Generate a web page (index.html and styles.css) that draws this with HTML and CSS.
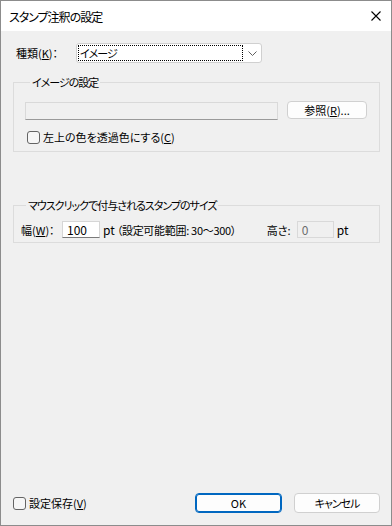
FILE: index.html
```html
<!DOCTYPE html>
<html>
<head>
  <title>スタンプ注釈の設定</title>
  <link rel="stylesheet" href="styles.css">
</head>
<body>
  <div class="window">
    <div class="titlebar">
      <span class="title kana">スタンプ注釈の設定</span>
      <svg class="close" width="10" height="10" viewBox="0 0 10 10">
        <path d="M0.5 0.5 L9.5 9.5 M9.5 0.5 L0.5 9.5" stroke="#000" stroke-width="1.1" fill="none"/>
      </svg>
    </div>

    <div class="client">
      <div class="type-row">
        <span class="label">種類(<u>K</u>)：</span>
        <div class="combo">
          <span class="combo-text kana">イメージ</span>
          <svg class="chevron" width="9" height="5" viewBox="0 0 9 5">
            <path d="M0.5 0.5 L4.5 4.5 L8.5 0.5" stroke="#606060" stroke-width="1" fill="none"/>
          </svg>
        </div>
      </div>

      <div class="group image-group">
        <div class="group-title kana">イメージの設定</div>
        <div class="file-row">
          <div class="field disabled wide"></div>
          <button class="btn browse">参照(<u>R</u>)...</button>
        </div>
        <label class="check-row">
          <span class="checkbox"></span>
          <span>左上の色を透過色にする(<u>C</u>)</span>
        </label>
      </div>

      <div class="group size-group">
        <div class="group-title kana">マウスクリックで付与されるスタンプのサイズ</div>
        <div class="size-row">
          <span class="label">幅(<u>W</u>)：</span>
          <div class="field small">100</div>
          <span class="unit">pt</span>
          <span class="range">（設定可能範囲: 30～300）</span>
          <span class="label height-label">高さ:</span>
          <div class="field small disabled">0</div>
          <span class="unit">pt</span>
        </div>
      </div>

      <div class="bottom-row">
        <label class="check-row save">
          <span class="checkbox"></span>
          <span>設定保存(<u>V</u>)</span>
        </label>
        <button class="btn ok">OK</button>
        <button class="btn cancel kana">キャンセル</button>
      </div>
    </div>
  </div>
</body>
</html>
```

FILE: styles.css
```css
body {
  margin: 0;
  font-family: "Noto Sans CJK JP", "Noto Sans", sans-serif;
  font-size: 11px;
  font-feature-settings: "palt";
  color: #000;
}
u {
  text-decoration: underline;
  text-underline-offset: 1px;
}
/* katakana in the dialog font runs narrower */
.kana {
  letter-spacing: -1px;
}
.window {
  width: 392px;
  height: 526px;
  box-sizing: border-box;
  border: 1px solid #8c8c8c;
  background: #f0f0f0;
  display: flex;
  flex-direction: column;
}
.titlebar {
  height: 30px;
  background: #fff;
  display: flex;
  align-items: center;
  padding-left: 8px;
  font-size: 12px;
}
.title {
  flex: 1;
}
.close {
  margin-right: 10px;
}
.client {
  flex: 1;
  display: flex;
  flex-direction: column;
  padding: 0 11px 12px 12px;
}
.type-row {
  display: flex;
  align-items: center;
  margin-top: 12px;
  height: 20px;
}
.type-row .label {
  width: 60px;
  padding-left: 3px;
}
.combo {
  width: 186px;
  height: 20px;
  box-sizing: border-box;
  background: #fff;
  border: 1px solid #d0d0d0;
  border-radius: 3px;
  display: flex;
  align-items: center;
}
.combo-text {
  width: 165px;
  height: 16px;
  box-sizing: border-box;
  margin-left: 1px;
  border: 1px dotted #000;
  line-height: 14px;
  padding-left: 1px;
}
.chevron {
  margin-left: 5px;
}
.group {
  border: 1px solid #dcdcdc;
}
.group-title {
  display: table;
  margin: -8px 0 0 5px;
  padding: 0 2px;
  line-height: 14px;
  background: #f0f0f0;
}
.image-group {
  margin-top: 19px;
  padding: 0 0 7px 11px;
}
.file-row {
  display: flex;
  align-items: flex-start;
  margin-top: 12px;
}
.field {
  box-sizing: border-box;
  height: 18px;
  background: #fff;
  border: 1px solid #d6d6d6;
  border-bottom-color: #7a7a7a;
  line-height: 16px;
  padding-left: 4px;
}
.field.disabled {
  background: #f0f0f0;
  border-color: #d9d9d9;
  color: #6d6d6d;
}
.field.wide {
  width: 253px;
  margin-top: 1px;
  border-bottom-color: #9a9a9a;
}
.btn {
  font-family: inherit;
  font-size: 11px;
  font-feature-settings: "palt";
  background: #fdfdfd;
  border: 1px solid #d0d0d0;
  border-radius: 4px;
  padding: 0;
  color: #000;
}
.browse {
  width: 80px;
  height: 18px;
  margin-left: 9px;
  line-height: 16px;
}
.check-row {
  display: flex;
  align-items: center;
  height: 14px;
}
.image-group .check-row {
  margin-top: 10px;
  margin-left: 2px;
}
.checkbox {
  width: 13px;
  height: 13px;
  box-sizing: border-box;
  border: 1px solid #646464;
  border-radius: 3px;
  background: #f6f6f6;
  margin-right: 3px;
}
.size-group {
  margin-top: 53px;
  padding: 0 0 4px 7px;
}
.size-row {
  display: flex;
  align-items: center;
  margin-top: 9px;
  height: 17px;
}
.size-row .label {
  width: 41px;
}
.field.small {
  width: 38px;
  height: 17px;
  line-height: 15px;
  font-size: 12px;
}
.size-row .field.disabled {
  width: 37px;
}
.unit {
  margin-left: 3px;
  font-size: 12px;
}
.range {
  margin-left: 2px;
  width: 150px;
  letter-spacing: -0.3px;
}
.height-label.label {
  width: 30px;
}
.bottom-row {
  margin-top: auto;
  display: flex;
  align-items: center;
  height: 20px;
}
.bottom-row .check-row {
  flex: 1;
}
.ok {
  width: 87px;
  height: 20px;
  border: 1px solid #0067c0;
  box-shadow: inset 0 0 0 1px #0067c0;
}
.cancel {
  width: 86px;
  height: 20px;
  margin-left: 12px;
}
```
